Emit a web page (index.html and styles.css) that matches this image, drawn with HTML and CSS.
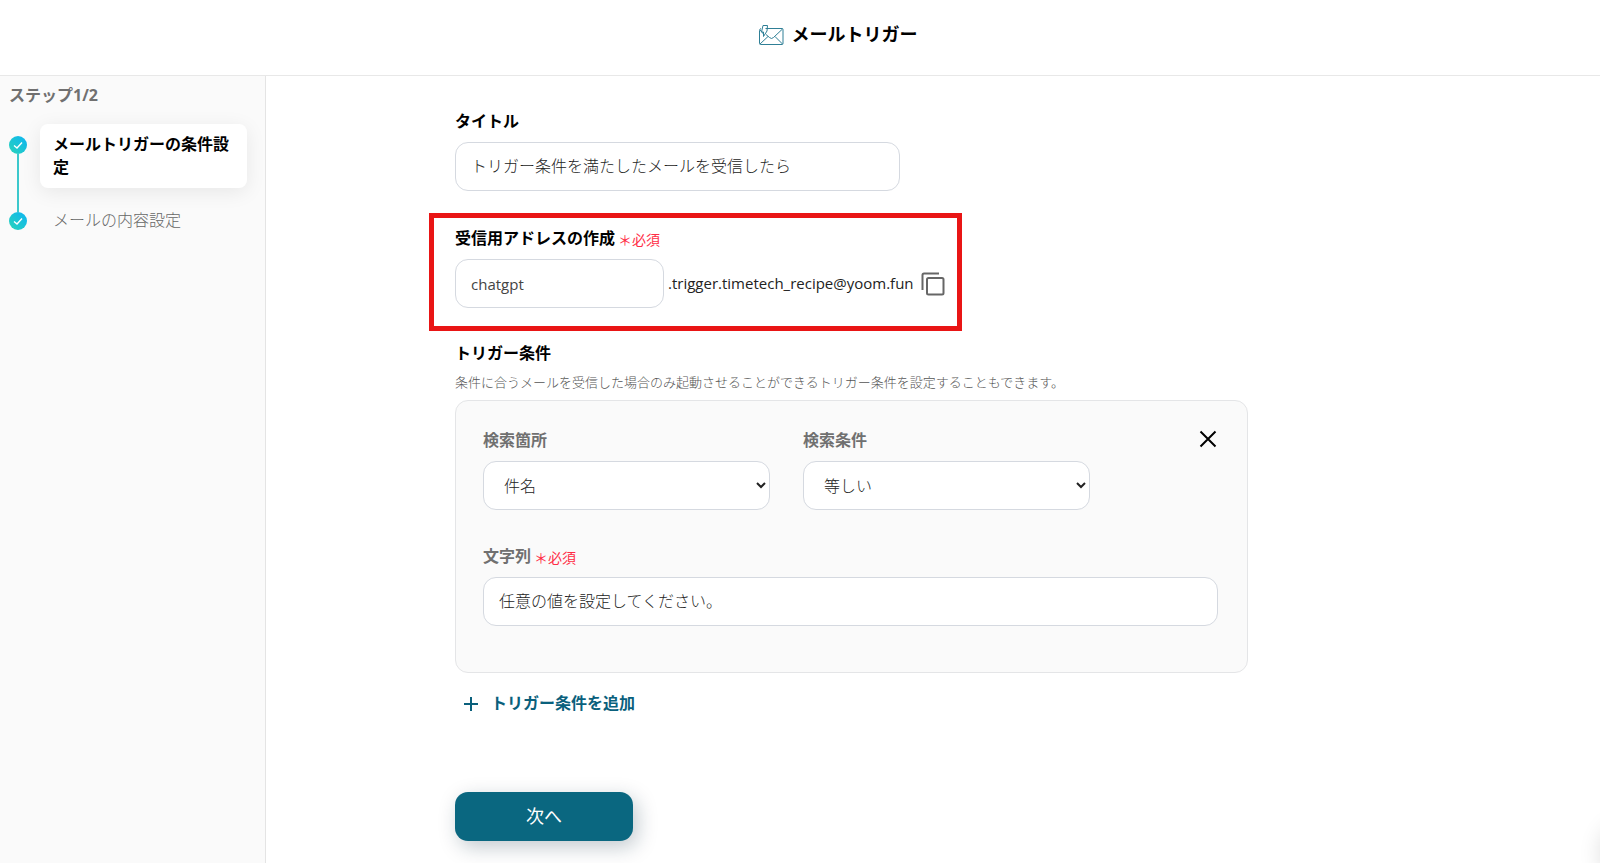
FILE: index.html
```html
<!DOCTYPE html>
<html lang="ja">
<head>
    <meta charset="UTF-8">
    <meta name="viewport" content="width=device-width, initial-scale=1.0">
    <title>メールトリガー</title>
    <link rel="stylesheet" href="styles.css">
</head>
<body>
    <header class="header">
        <svg class="mail-icon" viewBox="0 0 26 22" width="26" height="22" fill="none" stroke="#2f7f96" stroke-width="1">
            <path d="M7.5 4.5H24Q25 4.5 25 5.5V19.5Q25 20.5 24 20.5H2.5Q1.5 20.5 1.5 19.5V6.5Q1.5 5 3 4.5"/>
            <path d="M2 20L10 12.5M24.5 20L17 12.5M24.5 5L15.5 13.5Q13.5 15.5 11.5 13.5L8 10.5"/>
            <path d="M2 6L5.5 10M5.5 12.5V8H3.5L5 1.5H9.5L9 7L5.5 12.5"/>
        </svg>
        <h1>メールトリガー</h1>
    </header>

    <div class="layout">
        <aside class="sidebar">
            <p class="step-count">ステップ1/2</p>
            <ol class="steps">
                <li class="step active">
                    <svg class="step-icon" viewBox="0 0 18 18" width="18" height="18">
                        <defs>
                            <linearGradient id="stepFill" x1="0" y1="1" x2="1" y2="0">
                                <stop offset="0" stop-color="#2ad4b8"/>
                                <stop offset="1" stop-color="#0db4f4"/>
                            </linearGradient>
                        </defs>
                        <circle cx="9" cy="9" r="9" fill="url(#stepFill)"/>
                        <path d="M5 9.5L8 12L13 6.5" fill="none" stroke="#fff" stroke-width="1.4"/>
                    </svg>
                    <span class="step-label">メールトリガーの条件設定</span>
                </li>
                <li class="step">
                    <svg class="step-icon" viewBox="0 0 18 18" width="18" height="18">
                        <circle cx="9" cy="9" r="9" fill="url(#stepFill)"/>
                        <path d="M5 9.5L8 12L13 6.5" fill="none" stroke="#fff" stroke-width="1.4"/>
                    </svg>
                    <span class="step-label">メールの内容設定</span>
                </li>
            </ol>
        </aside>

        <main class="main">
            <form class="form">
                <div class="field title-field">
                    <label for="title">タイトル</label>
                    <input type="text" id="title" value="トリガー条件を満たしたメールを受信したら">
                </div>

                <div class="field highlight">
                    <label for="address">受信用アドレスの作成<span class="required">＊必須</span></label>
                    <div class="address-row">
                        <input type="text" id="address" value="chatgpt">
                        <span class="address-suffix">.trigger.timetech_recipe@yoom.fun</span>
                        <button type="button" class="icon-btn" aria-label="コピー">
                            <svg viewBox="0 0 24 24" width="24" height="24" fill="none" stroke="#666" stroke-width="2">
                                <path d="M1.5 18V3Q1.5 1.5 3 1.5H18"/>
                                <rect x="6" y="6" width="16.5" height="16.5" rx="1.5"/>
                            </svg>
                        </button>
                    </div>
                </div>

                <section class="conditions">
                    <h2>トリガー条件</h2>
                    <p class="description">条件に合うメールを受信した場合のみ起動させることができるトリガー条件を設定することもできます。</p>

                    <div class="panel">
                        <div class="select-row">
                            <div class="field">
                                <label for="place">検索箇所</label>
                                <select id="place">
                                    <option>件名</option>
                                </select>
                            </div>
                            <div class="field">
                                <label for="operator">検索条件</label>
                                <select id="operator">
                                    <option>等しい</option>
                                </select>
                            </div>
                            <button type="button" class="icon-btn close-btn" aria-label="削除">
                                <svg viewBox="0 0 20 20" width="20" height="20" stroke="#000" stroke-width="2">
                                    <path d="M2.5 2.5L17.5 17.5M17.5 2.5L2.5 17.5"/>
                                </svg>
                            </button>
                        </div>
                        <div class="field">
                            <label for="keyword">文字列<span class="required">＊必須</span></label>
                            <input type="text" id="keyword" value="任意の値を設定してください。">
                        </div>
                    </div>

                    <button type="button" class="add-btn">
                        <svg viewBox="0 0 16 16" width="16" height="16" stroke="currentColor" stroke-width="2">
                            <path d="M8 1V15M1 8H15"/>
                        </svg>
                        トリガー条件を追加
                    </button>
                </section>

                <button type="submit" class="next-btn">次へ</button>
            </form>
        </main>
    </div>

    <div class="chat-bubble"></div>
</body>
</html>
```
FILE: styles.css
```css
* {
    margin: 0;
    padding: 0;
    box-sizing: border-box;
}

body {
    min-height: 100vh;
    display: flex;
    flex-direction: column;
    overflow-x: hidden;
    background: #fff;
    color: #000;
    font-family: "Open Sans", "Noto Sans CJK JP", sans-serif;
    font-size: 16px;
    line-height: 23px;
}

input, select, button {
    font: inherit;
    color: inherit;
}

button {
    border: none;
    background: none;
    cursor: pointer;
}

svg {
    display: block;
}

.header {
    display: flex;
    justify-content: center;
    align-items: center;
    gap: 8px;
    height: 76px;
    padding: 0 0 6px 75px;
    border-bottom: 1px solid #e8e8e8;
}

h1 {
    font-size: 18px;
    font-weight: 700;
}

.layout {
    flex: 1;
    display: grid;
    grid-template-columns: 266px 1fr;
}

/* sidebar */
.sidebar {
    padding: 8px 18px 8px 9px;
    background: #fafafa;
    border-right: 1px solid #e4e4e4;
}

.step-count {
    color: #707070;
    font-weight: 700;
}

.steps {
    display: flex;
    flex-direction: column;
    gap: 12px;
    margin-top: 17px;
    list-style: none;
}

.step {
    position: relative;
    display: flex;
    align-items: flex-start;
    gap: 13px;
    color: #666;
    font-weight: 300;
}

.step-icon {
    flex: none;
    margin-top: 12px;
}

.step-label {
    flex: 1;
    padding: 9px 13px;
    border-radius: 8px;
}

.step.active .step-label {
    background: #fff;
    color: #000;
    font-weight: 700;
    box-shadow: 0 4px 20px rgba(0, 0, 0, 0.08);
}

.step.active::after {
    content: "";
    position: absolute;
    left: 8px;
    top: 30px;
    bottom: -24px;
    width: 2px;
    background: #3cc8cc;
}

/* form */
.main {
    padding: 34px 32px 16px 189px;
}

.form {
    max-width: 793px;
}

.field label {
    display: flex;
    align-items: center;
    gap: 3px;
    margin-bottom: 9px;
    font-weight: 700;
}

.required {
    padding-top: 2px;
    color: #ff2d46;
    font-size: 14px;
    font-weight: 400;
    line-height: 21px;
}

.field input, .field select {
    display: block;
    width: 100%;
    height: 49px;
    padding: 0 16px;
    border: 1px solid #d5d9e0;
    border-radius: 13px;
    background: #fff;
    color: #222;
    font-weight: 300;
}

.field input {
    padding: 0 15px 4px;
}

.title-field {
    max-width: 445px;
}

.highlight {
    width: fit-content;
    margin: 22px 0 11px -26px;
    padding: 9px 12px 18px 21px;
    border: 5px solid #e91515;
}

.address-row {
    display: flex;
    align-items: center;
    font-size: 15px;
}

.field .address-row input {
    width: 209px;
    padding-bottom: 0;
    color: #444;
    font-weight: 400;
}

.address-suffix {
    margin: 0 7px 0 4px;
    color: #222;
}

h2 {
    font-size: 16px;
    font-weight: 700;
}

.description {
    margin: 6px 0;
    color: #555;
    font-size: 13px;
    font-weight: 300;
}

.panel {
    padding: 28px 29px 46px 27px;
    border: 1px solid #e4e5e7;
    border-radius: 13px;
    background: #fafafa;
}

.panel label {
    color: #707070;
}

.select-row {
    display: flex;
    align-items: flex-start;
    gap: 33px;
    margin-bottom: 35px;
}

.select-row .field {
    flex: 0 1 287px;
}

.close-btn {
    margin-left: auto;
}

.add-btn {
    display: flex;
    align-items: center;
    gap: 12px;
    margin-top: 19px;
    padding: 0 8px;
    color: #0a607c;
    font-weight: 700;
}

.next-btn {
    display: block;
    width: 178px;
    height: 49px;
    margin-top: 77px;
    border-radius: 13px;
    background: #0a6780;
    color: #fff;
    font-size: 18px;
    box-shadow: 4px 6px 20px rgba(10, 40, 60, 0.25);
}

/* chat launcher waits just off the right edge */
.chat-bubble {
    position: fixed;
    right: -62px;
    bottom: -20px;
    width: 60px;
    height: 60px;
    border-radius: 50%;
    box-shadow: 0 0 24px rgba(0, 0, 0, 0.16);
}
```
